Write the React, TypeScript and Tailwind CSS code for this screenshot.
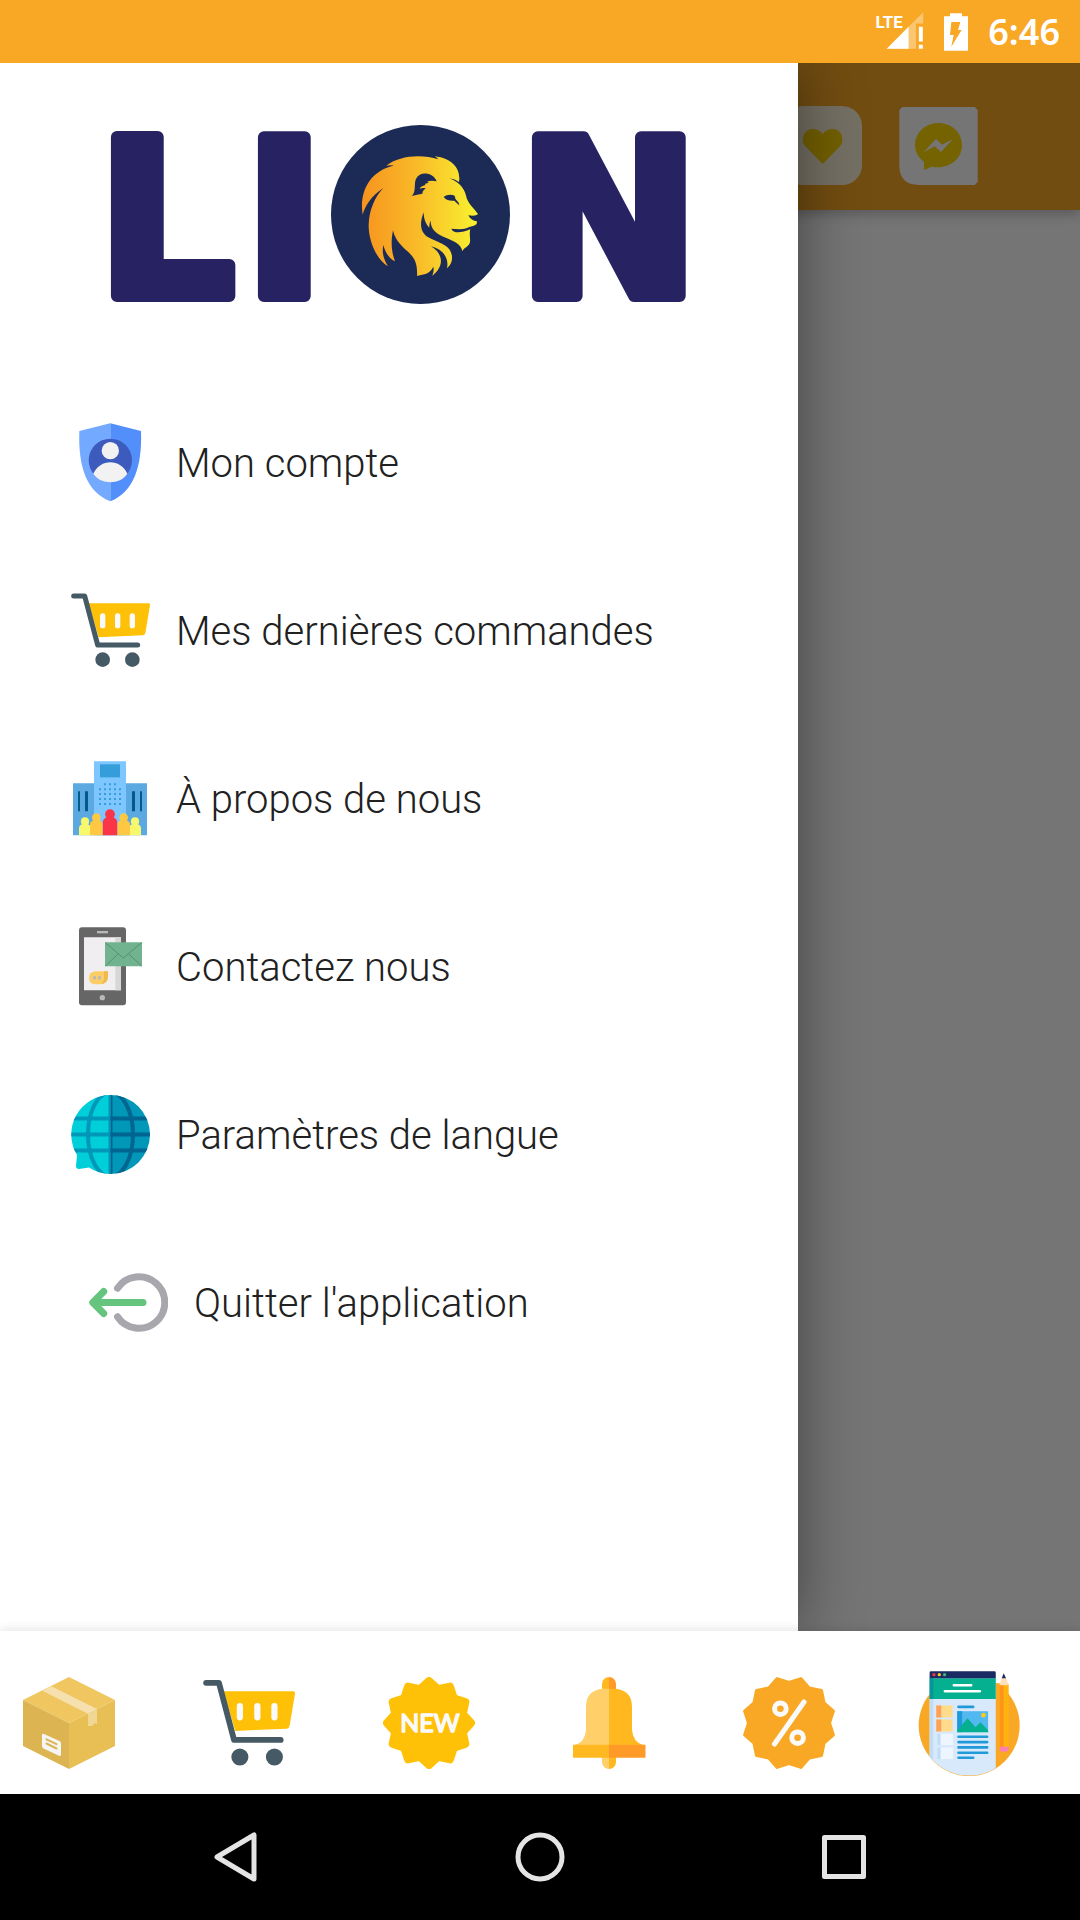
import type { ReactNode } from 'react';

interface MenuEntry {
  label: string;
  icon: ReactNode;
  indented?: boolean;
}

interface Tab {
  label: string;
  icon: ReactNode;
}

// Points of a star with alternating tip / notch radii around (46, 46).
function starPoints(tips: number, outer: number, inner: number, startDeg: number) {
  const points: string[] = [];
  for (let i = 0; i < tips * 2; i++) {
    const radius = i % 2 === 0 ? outer : inner;
    const angle = ((startDeg + (i * 180) / tips) * Math.PI) / 180;
    points.push(`${(46 + radius * Math.cos(angle)).toFixed(2)},${(46 + radius * Math.sin(angle)).toFixed(2)}`);
  }
  return points.join(' ');
}

function LionLogo() {
  return (
    <svg viewBox="94 90 610 260" className="w-full max-w-[610px]" role="img" aria-label="LION">
      <defs>
        <linearGradient id="mane" gradientUnits="userSpaceOnUse" x1="125" y1="0" x2="475" y2="0">
          <stop offset="0" stopColor="#f7931e" />
          <stop offset="0.5" stopColor="#f9bd29" />
          <stop offset="0.95" stopColor="#f8ee2f" />
        </linearGradient>
      </defs>
      <g
        fill="#272262"
        stroke="#272262"
        strokeWidth="12"
        strokeLinejoin="round"
        fontFamily="DejaVu Sans, sans-serif"
        fontWeight="700"
        fontSize="217"
      >
        <text x="97" y="296">L</text>
        <text x="244" y="296">I</text>
        <text x="518" y="296">N</text>
      </g>
      <circle cx="420.500" cy="214.500" r="89.500" fill="#1c2b55" />
      <g transform="translate(320 115) scale(0.33333)">
        <path
          fill="url(#mane)"
          d="M128 299C116 225 155 165 222 152Q212 149 199 152C235 124 300 116 355 133Q352 128 344 124C400 130 423 165 417 201Q405 192 388 190C422 202 436 226 440 250C448 270 462 280 474 297C468 304 456 302 445 301C450 312 460 318 471 319L470 327C464 334 454 333 448 336C430 346 410 342 394 341C400 357 425 354 451 343C446 360 454 376 448 387C440 398 432 398 427 409C424 386 400 378 370 365C345 354 332 340 332 317Q327 325 328 338C315 325 311 307 311 292C298 325 300 352 325 367C355 384 394 390 396 425C397 445 388 452 381 460C388 425 365 402 333 394C372 418 372 455 337 482Q343 468 340 455C328 480 306 478 291 483C294 435 276 420 252 400C225 373 222 358 219 346C210 390 218 420 225 439C206 430 195 410 190 390C184 420 195 438 204 454C165 430 145 370 146 330C147 285 165 245 190 219C152 245 136 272 128 299Z"
        />
        <path
          fill="#1c2b55"
          d="M275 243C290 232 280 205 289 190C300 168 340 172 350 199Q336 196 322 199L326 203Q312 206 316 210Q302 214 299 221Q308 218 318 220Q308 225 307 236Q292 238 275 243Z"
        />
        <path fill="#1c2b55" d="M371 246C380 238 395 238 404 242Q405 252 411 257Q417 262 418 271Q410 264 403 257C390 258 378 256 371 246Z" />
      </g>
    </svg>
  );
}

function ShieldIcon() {
  return (
    <svg viewBox="63 68 237 237" className="size-full" aria-hidden="true">
      <path fill="#73aaff" d="M181 69L88 92C84 200 110 275 181 303Z" />
      <path fill="#528ffb" d="M181 69L273 92C277 200 250 275 181 303Z" />
      <circle cx="181" cy="180" r="65" fill="#3c5bbc" />
      <circle cx="181" cy="151" r="26" fill="#f2f2f2" />
      <path fill="#f2f2f2" d="M130 220C150 174 212 174 232 220C210 254 152 254 130 220Z" />
    </svg>
  );
}

function CartIcon() {
  return (
    <svg viewBox="63 572 237 237" className="size-full" aria-hidden="true">
      <path fill="#ffc107" d="M116 609H295Q301 609 300 615L286 698Q285 704 279 705L146 711Z" />
      <g fill="#fafafa">
        <rect x="150" y="639" width="16" height="45" rx="8" />
        <rect x="195" y="639" width="16" height="45" rx="8" />
        <rect x="239" y="639" width="16" height="45" rx="8" />
      </g>
      <path
        fill="none"
        stroke="#455a64"
        strokeWidth="15"
        strokeLinecap="round"
        strokeLinejoin="round"
        d="M71 587H104L143 734H263"
      />
      <circle cx="158" cy="778" r="22" fill="#455a64" />
      <circle cx="247" cy="778" r="22" fill="#455a64" />
    </svg>
  );
}

function Person({ x, top, width, color }: { x: number; top: number; width: number; color: string }) {
  const r = width * 0.34;
  return (
    <g fill={color}>
      <circle cx={x} cy={top + r} r={r} />
      <path
        d={`M${x - width / 2} 285V${top + width * 0.9}Q${x - width / 2} ${top + width * 0.65} ${x - width * 0.2} ${top + width * 0.55}H${x + width * 0.2}Q${x + width / 2} ${top + width * 0.65} ${x + width / 2} ${top + width * 0.9}V285Z`}
      />
    </g>
  );
}

function CompanyIcon() {
  return (
    <svg viewBox="63 56 237 237" className="size-full" aria-hidden="true">
      <path fill="#5ba9e0" d="M69 129H291V285H69Z" />
      <path fill="#7dc6ff" d="M132 63H228V285H132Z" />
      <path fill="#359dd9" d="M150 72H210V111H150Z" />
      <path fill="#005a8c" d="M84 153h6v60h-6zM105 153h9v60h-9zM246 153h9v60h-9zM270 153h6v60h-6z" />
      <path stroke="#359dd9" strokeWidth="6" strokeDasharray="6 9" d="M162 132H198" />
      <path stroke="#359dd9" strokeWidth="6" strokeDasharray="6 9" d="M147 147H213M147 161H213M147 176H213M147 191H213" />
      <Person x={105} top={231} width={36} color="#f8f86c" />
      <Person x={255} top={231} width={36} color="#f8f86c" />
      <Person x={139} top={219} width={38} color="#ffc843" />
      <Person x={221} top={219} width={38} color="#ffc843" />
      <Person x={180} top={207} width={43} color="#fa3547" />
    </svg>
  );
}

function ContactIcon() {
  return (
    <svg viewBox="63 560 237 237" className="size-full" aria-hidden="true">
      <rect x="87" y="561" width="141" height="234" rx="9" fill="#666" />
      <path fill="#f0eef0" d="M102 591H213V750H102Z" />
      <path fill="#d8d7d8" d="M196 591H213V750H196Z" />
      <path fill="#b9b9b9" d="M141 572H174V579H141Z" />
      <circle cx="157" cy="772" r="8" fill="#b9b9b9" />
      <path fill="#fbcd66" d="M138 693H174V708Q174 732 150 732H136Q117 730 117 713Q117 694 138 693Z" />
      <path fill="#f0b94e" d="M162 693H174V708Q174 730 150 732Q162 728 162 712Z" />
      <path fill="#b9b9b9" d="M129 708h9v9h-9zM144 708h9v9h-9z" />
      <path fill="#71b38f" d="M165 606H276V678H165Z" />
      <path fill="none" stroke="#559070" strokeWidth="3" d="M166 607L220 653L275 607M166 677L204 641M275 677L236 641" />
    </svg>
  );
}

function GlobeIcon() {
  return (
    <svg viewBox="0 0 79 79" className="size-full" aria-hidden="true">
      <defs>
        <clipPath id="globe-left">
          <path d="M39.500 0A39.500 39.500 0 0 0 6 60L5 71Q5 74 8 74L18 72.500Q28 79 39.500 79Z" />
        </clipPath>
        <clipPath id="globe-right">
          <path d="M39.500 0A39.500 39.500 0 0 1 39.500 79Z" />
        </clipPath>
      </defs>
      <g clipPath="url(#globe-left)">
        <path fill="#00ced9" d="M0 0H40V79H0Z" />
        <g fill="none" stroke="#0097b8" strokeWidth="4">
          <path d="M0 23.500H40M0 39.500H40M0 55.500H40" />
          <path strokeWidth="5" d="M40 0V79" />
          <ellipse cx="39.500" cy="39.500" rx="22.500" ry="42" />
        </g>
      </g>
      <g clipPath="url(#globe-right)">
        <path fill="#0097b8" d="M39 0H79V79H39Z" />
        <g fill="none" stroke="#006590" strokeWidth="4">
          <path d="M39 23.500H79M39 39.500H79M39 55.500H79" />
          <path strokeWidth="5" d="M39 0V79" />
          <ellipse cx="39.500" cy="39.500" rx="22.500" ry="42" />
        </g>
      </g>
    </svg>
  );
}

function ExitIcon() {
  return (
    <svg viewBox="0 0 79 79" className="size-full" fill="none" strokeWidth="7" strokeLinecap="round" aria-hidden="true">
      <path stroke="#a8a7ae" d="M28.500 25.200A25.800 25.800 0 1 1 28.500 53.800" />
      <path stroke="#65c47d" strokeLinejoin="round" d="M54 39.500H4M14.700 28.500L3.800 39.500L14.700 50.500" />
    </svg>
  );
}

function BoxIcon() {
  return (
    <svg viewBox="0 0 92 92" className="size-[92px]" aria-hidden="true">
      <path fill="#f0c660" d="M46 0L92 23L46 46L0 23Z" />
      <path fill="#dcb452" d="M0 23L46 46V92L0 69Z" />
      <path fill="#e8bf55" d="M92 23L46 46V92L92 69Z" />
      <path fill="#f6e1ae" d="M19.400 13.700L28.300 9.300L74 32L65 36.700Z" />
      <path fill="#f1d794" d="M65 36.700L74 32V47L72 46L69 49L65 49Z" />
      <path fill="#f5f5f5" d="M19 58Q19 56 21 57L36.500 64Q38 65 38 66V77.500Q38 79.500 36 78.700L20.500 71.500Q19 70.700 19 69Z" />
      <path stroke="#dcb452" strokeWidth="2" strokeLinecap="round" d="M23.500 62.300L33.500 67.200M23.500 66.500L33.500 71.500" />
    </svg>
  );
}

function NewIcon() {
  return (
    <svg viewBox="0 0 92 92" className="size-[92px]" aria-hidden="true">
      <polygon points={starPoints(12, 42, 35, -90)} fill="#ffc107" stroke="#ffc107" strokeWidth="8" strokeLinejoin="round" />
      <text
        x="47"
        y="55"
        textAnchor="middle"
        fontFamily="Lato, sans-serif"
        fontWeight="400"
        fontSize="25"
        fill="#fafafa"
        stroke="#fafafa"
        strokeWidth="1.5"
        strokeLinejoin="round"
      >
        NEW
      </text>
    </svg>
  );
}

function BellIcon() {
  return (
    <svg viewBox="0 0 92 92" className="size-[92px]" aria-hidden="true">
      <path fill="#ffb820" d="M39 13V7A7 7 0 0 1 46 0V13Z" />
      <path fill="#ff9a28" d="M53 13V7A7 7 0 0 0 46 0V13Z" />
      <path fill="#ffd06a" d="M39 80V85A7 7 0 0 0 46 92V80Z" />
      <path fill="#ffb820" d="M53 80V85A7 7 0 0 1 46 92V80Z" />
      <path fill="#ffd06a" d="M46 11.700H40Q23 13 23 30V53Q22 65 12 68H46Z" />
      <path fill="#ffb820" d="M46 11.700H52Q69 13 69 30V53Q70 65 80 68H46Z" />
      <path fill="#ffb820" d="M10 67.700H46V80.700H10Z" />
      <path fill="#ff9a28" d="M46 67.700H82.500V80.700H46Z" />
    </svg>
  );
}

function PromoIcon() {
  return (
    <svg viewBox="0 0 92 92" className="size-[92px]" aria-hidden="true">
      <polygon points={starPoints(12, 46, 40.5, -75)} fill="#f9a825" stroke="#f9a825" strokeWidth="3" strokeLinejoin="round" />
      <g fill="none" stroke="#fafafa" strokeWidth="5" strokeLinecap="round">
        <circle cx="37.400" cy="31.700" r="5.800" />
        <circle cx="54.600" cy="60.700" r="5.800" />
        <path d="M61 25L31.500 67" />
      </g>
    </svg>
  );
}

function BlogIcon() {
  return (
    <svg viewBox="50 59 316 316" className="size-[105px] overflow-visible" aria-hidden="true">
      <defs>
        <clipPath id="blog-page">
          <path d="M54 62H360V225A153 152 0 0 1 54 225Z" />
        </clipPath>
      </defs>
      <circle cx="207" cy="226" r="152" fill="#f9a825" />
      <path fill="#f9a825" d="M287 99H300V150H287Z" />
      <g clipPath="url(#blog-page)">
        <path fill="#d9e9fc" d="M88 66H287V378H88Z" />
        <path fill="#c2dcf5" d="M88 146H99V340H88Z" />
        <path fill="#04b090" d="M88 84H287V146H88Z" />
        <path fill="#08949a" d="M88 84H99V146H88Z" />
        <path fill="#1a2b63" d="M88 84V67Q88 63 92 63H283Q287 63 287 67V84Z" />
      </g>
      <circle cx="101" cy="73" r="5" fill="#f5334a" />
      <circle cx="117" cy="73" r="5" fill="#fbc91b" />
      <circle cx="133" cy="73" r="5" fill="#3eb27b" />
      <path stroke="#fff" strokeWidth="8" strokeLinecap="round" d="M161 105H213M134 123H239" />
      <path fill="#ffdb8c" d="M108 166H157V202H108ZM108 208H157V244H108Z" />
      <path fill="#ff9f5c" d="M108 166H123V202H108ZM108 208H123V244H108Z" />
      <path fill="#edf5ff" d="M111 251H158V285H111ZM111 292H158V327H111Z" />
      <path fill="#c2dcf5" d="M111 251H121V285H111ZM111 292H121V327H111Z" />
      <path
        stroke="#1f99d8"
        strokeWidth="8"
        strokeLinecap="round"
        d="M175 170H219M175 260H261M175 276H261M175 292H261M175 308H261M175 323H219"
      />
      <path fill="#52b8f0" d="M171 183H264V246H171Z" />
      <path fill="#1f99d8" d="M171 183H186V246H171Z" />
      <circle cx="250" cy="195" r="7" fill="#fbc91b" />
      <path fill="#04b090" d="M171 246V241L202 204L226 231L241 216L264 240V246Z" />
      <path fill="#ffb30f" d="M299 102H326V292H299Z" />
      <path fill="#ff9518" d="M299 102H311V292H299Z" />
      <path fill="#ffe0b8" d="M298 104L306 81H317L326 104Q312 106 298 104Z" />
      <path fill="#1a2b63" d="M305 84L311 69L318 84Z" />
      <path fill="#fb7fb0" d="M299 290H326V299L320 305H305L299 299Z" />
    </svg>
  );
}

function StatusBar() {
  return (
    <header className="flex h-[63px] items-center justify-end gap-5 bg-[#f9a825] pr-5 text-white">
      <svg viewBox="99 28 147 136" className="h-[45px] w-[49px]" role="img" aria-label="LTE">
        <path fill="#fff" opacity="0.35" d="M244 38V72H222V148H134Z" />
        <path fill="#fff" d="M200 82V148H134ZM231 82H243V126H231ZM231 136H243V148H231Z" />
        <text x="100" y="86" fontFamily="Roboto, sans-serif" fontWeight="700" fontSize="51" fill="#fff">
          LTE
        </text>
      </svg>
      <svg viewBox="309 37 72 112" className="h-[38px] w-6" role="img" aria-label="Batterie en charge">
        <path fill="#fff" d="M327 37H363V46H381V149H309V46H327Z" />
        <path fill="#f9a825" d="M331 63H358L351 87H362L331 137L338 102H327Z" />
      </svg>
      <time className="font-['Noto_Sans'] text-[36px] leading-none font-semibold">6:46</time>
    </header>
  );
}

function AppBar() {
  return (
    <div className="flex h-[147px] items-center justify-end gap-[37px] bg-[#f9a825] pt-[18px] pr-[102px] shadow-[0_4px_12px_rgba(0,0,0,0.25)]">
      <button type="button" aria-label="Favoris" className="size-[79px]">
        <svg viewBox="0 0 237 237" className="size-full">
          <rect width="237" height="237" rx="60" fill="#fff5da" />
          <path fill="#fad100" d="M119 174L67 121C52 104 60 70 89 69Q108 69 119 84Q130 69 149 69C178 70 186 104 171 121Z" />
        </svg>
      </button>
      <button type="button" aria-label="Messenger" className="size-[79px]">
        <svg viewBox="0 0 237 237" className="size-full">
          <path fill="#fff" d="M10 3H227L236 12V228L227 237H60Q1 237 1 178V12Z" />
          <path fill="#ffd600" d="M118 51C78 51 48 81 48 118Q48 148 75 168V192L98 182C150 192 189 159 189 117C189 80 158 51 118 51Z" />
          <path fill="#fff" d="M74 139L111 99L129 116L162 99L126 138L107 121Z" />
        </svg>
      </button>
    </div>
  );
}

const menuEntries: MenuEntry[] = [
  { label: 'Mon compte', icon: <ShieldIcon /> },
  { label: 'Mes dernières commandes', icon: <CartIcon /> },
  { label: 'À propos de nous', icon: <CompanyIcon /> },
  { label: 'Contactez nous', icon: <ContactIcon /> },
  { label: 'Paramètres de langue', icon: <GlobeIcon /> },
  { label: "Quitter l'application", icon: <ExitIcon />, indented: true },
];

const tabs: Tab[] = [
  { label: 'Produits', icon: <BoxIcon /> },
  { label: 'Panier', icon: <span className="block size-[92px]"><CartIcon /></span> },
  { label: 'Nouveautés', icon: <NewIcon /> },
  { label: 'Notifications', icon: <BellIcon /> },
  { label: 'Promotions', icon: <PromoIcon /> },
  { label: 'Blog', icon: <BlogIcon /> },
];

function Drawer() {
  return (
    <aside className="z-10 col-start-1 row-start-1 w-[798px] max-w-full bg-white shadow-[0_0_60px_rgba(0,0,0,0.45)]">
      <div className="flex justify-center pt-[27px] pb-7">
        <LionLogo />
      </div>
      <nav aria-label="Menu principal">
        <ul>
          {menuEntries.map((entry) => (
            <li key={entry.label}>
              <a
                href="#"
                className={`flex h-[168px] items-center gap-[26px] text-[40px] font-light text-[#212121] ${
                  entry.indented ? 'pl-[89px]' : 'pl-[71px]'
                }`}
              >
                <span className="size-[79px] shrink-0">{entry.icon}</span>
                <span className="pt-1">{entry.label}</span>
              </a>
            </li>
          ))}
        </ul>
      </nav>
    </aside>
  );
}

function TabBar() {
  return (
    <nav
      aria-label="Navigation"
      className="relative z-20 grid h-[163px] grid-cols-6 bg-white pt-5 shadow-[0_-1px_10px_rgba(0,0,0,0.12)]"
    >
      {tabs.map((tab) => (
        <button key={tab.label} type="button" aria-label={tab.label} className="flex items-center justify-center pr-[42px]">
          {tab.icon}
        </button>
      ))}
    </nav>
  );
}

function SystemBar() {
  return (
    <footer className="relative z-20 flex h-[126px] items-center justify-center gap-[252px] bg-black">
      <button type="button" aria-label="Retour">
        <svg viewBox="0 0 52 52" className="size-[52px]" fill="none" stroke="#e4e4e4" strokeWidth="5" strokeLinejoin="round">
          <path d="M44 4V48L7 26Z" />
        </svg>
      </button>
      <button type="button" aria-label="Accueil">
        <svg viewBox="0 0 52 52" className="size-[52px]" fill="none" stroke="#e4e4e4" strokeWidth="5">
          <circle cx="26" cy="26" r="22" />
        </svg>
      </button>
      <button type="button" aria-label="Applications récentes">
        <svg viewBox="0 0 52 52" className="size-[52px]" fill="none" stroke="#e4e4e4" strokeWidth="5" strokeLinejoin="round">
          <path d="M6.500 6.500H45.500V45.500H6.500Z" />
        </svg>
      </button>
    </footer>
  );
}

export default function App() {
  return (
    <div className="flex min-h-screen flex-col bg-white font-[Roboto,sans-serif]">
      <StatusBar />
      <main className="grid flex-1 overflow-hidden">
        <div className="relative col-start-1 row-start-1">
          <AppBar />
          <div className="absolute inset-0 bg-black/54" />
        </div>
        <Drawer />
      </main>
      <TabBar />
      <SystemBar />
    </div>
  );
}
